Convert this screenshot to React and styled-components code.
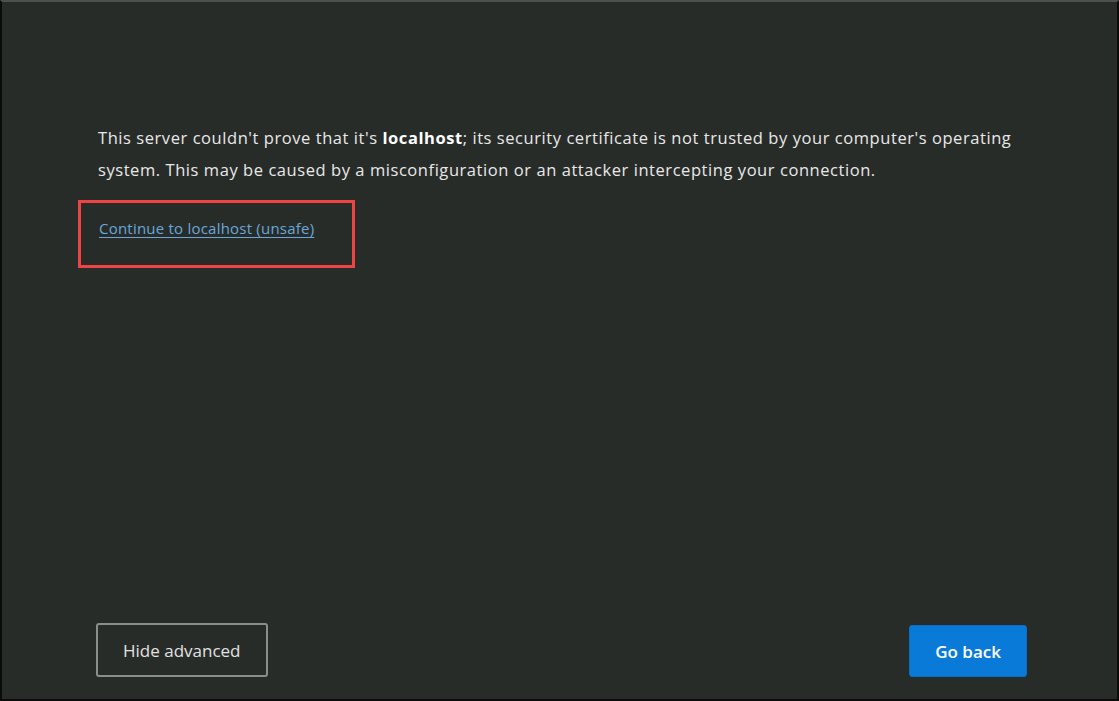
import React from 'react'
import styled, { createGlobalStyle } from 'styled-components'

const GlobalStyle = createGlobalStyle`
  html, body {
    margin: 0;
    padding: 0;
    background: #000;
  }
  * {
    box-sizing: border-box;
  }
`

const Frame = styled.div`
  width: 1119px;
  height: 701px;
  background: #282c29;
  border-top: 2px solid #4d504e;
  border-left: 2px solid #0b0b0b;
  border-right: 2px solid #0b0b0b;
  border-bottom: 2px solid #0b0b0b;
  display: flex;
  flex-direction: column;
  justify-content: space-between;
  padding: 120px 80px 22px 94px;
  font-family: "Open Sans", "Noto Sans", sans-serif;
  color: #e6e6e6;
`

const Details = styled.div`
  display: flex;
  flex-direction: column;
`

const Message = styled.p`
  margin: 0 0 0 2px;
  font-size: 16.5px;
  line-height: 32px;
  letter-spacing: 0.56px;
  color: #e8e8e8;
  max-width: 935px;

  strong {
    font-weight: 700;
    color: #fff;
  }
`

const Highlight = styled.div`
  align-self: flex-start;
  margin: 14px 0 0 -18px;
  padding: 14px 38px 26px 18px;
  border: 3px solid #ee4444;
`

const ProceedLink = styled.a`
  font-size: 15px;
  line-height: 22px;
  letter-spacing: 0.22px;
  color: #6aa7d8;
  text-decoration: underline;
  text-underline-offset: 3px;
  cursor: pointer;
`

const Actions = styled.div`
  display: flex;
  justify-content: space-between;
  align-items: center;
  padding-right: 10px;
`

const Button = styled.button`
  font-family: "Open Sans", "Noto Sans", sans-serif;
  font-size: 17px;
  height: ${p => (p.$primary ? '52px' : '54px')};
  padding: 0 25px;
  margin-top: ${p => (p.$primary ? '2px' : '0')};
  border-radius: 3px;
  cursor: pointer;
  border: ${p => (p.$primary ? '1px solid #0a6fc4' : '2px solid #8b8d8c')};
  background: ${p => (p.$primary ? '#0a7ad8' : 'transparent')};
  color: ${p => (p.$primary ? '#fff' : '#e2e2e2')};
  font-weight: ${p => (p.$primary ? 600 : 400)};
`

export default function App() {
  return (
    <>
      <GlobalStyle />
      <Frame>
        <Details>
          <Message>
            This server couldn't prove that it's <strong>localhost</strong>; its security certificate is not
            trusted by your computer's operating system. This may be caused by a misconfiguration or an
            attacker intercepting your connection.
          </Message>
          <Highlight>
            <ProceedLink>Continue to localhost (unsafe)</ProceedLink>
          </Highlight>
        </Details>
        <Actions>
          <Button>Hide advanced</Button>
          <Button $primary>Go back</Button>
        </Actions>
      </Frame>
    </>
  )
}
